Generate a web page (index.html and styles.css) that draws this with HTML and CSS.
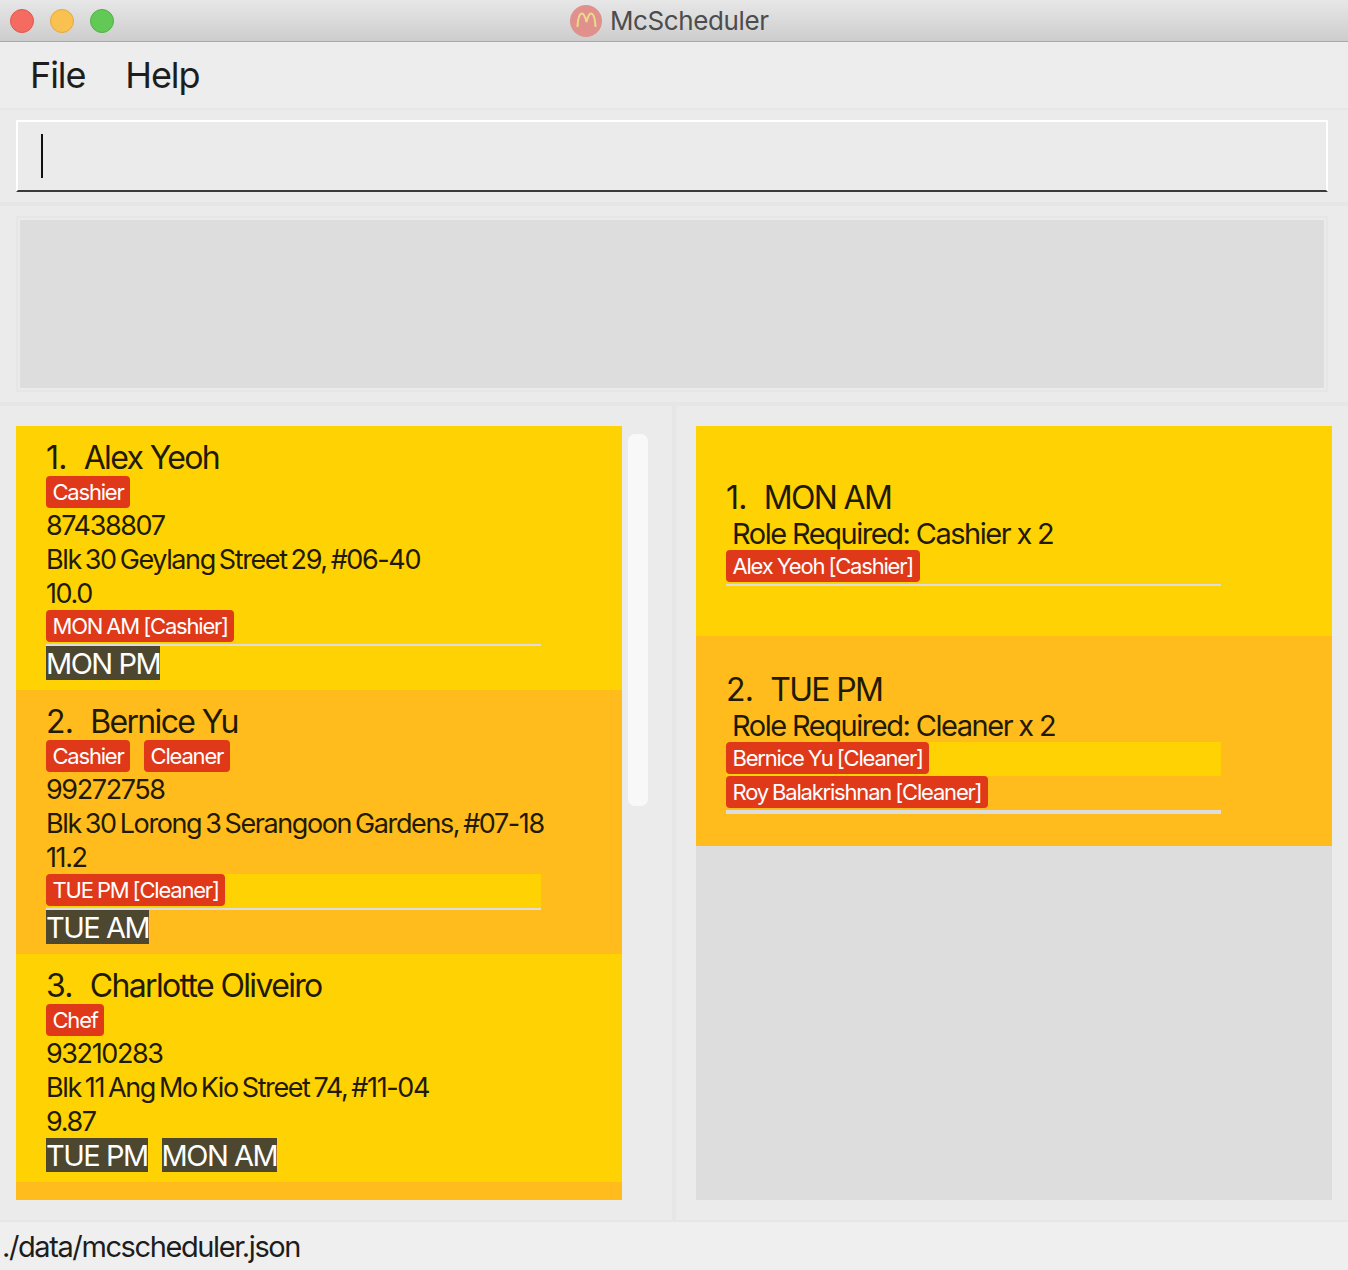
FILE: index.html
```html
<!DOCTYPE html>
<html lang="en">
<head>
    <meta charset="UTF-8">
    <meta name="viewport" content="width=device-width, initial-scale=1.0">
    <title>McScheduler</title>
    <link rel="stylesheet" href="styles.css">
</head>
<body>

<div class="titlebar">
    <div class="lights">
        <span class="light red"></span>
        <span class="light amber"></span>
        <span class="light green"></span>
    </div>
    <div class="title">
        <svg class="logo" viewBox="0 0 32 32" width="32" height="32">
            <circle cx="16" cy="16" r="16" fill="#e0918b"/>
            <path d="M7.5 22 C8 13 9.5 8.5 12 8.5 C14 8.5 15.5 13 16.5 17 C17.5 13 19 8.5 21 8.5 C23.5 8.5 25 13 25.5 22" fill="none" stroke="#eed98e" stroke-width="2"/>
        </svg>
        <span>McScheduler</span>
    </div>
</div>

<div class="menubar">
    <span>File</span>
    <span>Help</span>
</div>

<div class="command-pane">
    <div class="command-box"><div class="caret"></div></div>
</div>

<div class="result-pane">
    <div class="result-box"><div class="result-inner"></div></div>
</div>

<div class="lists">
    <div class="col col-left">
        <div class="list">
            <div class="card odd person">
                <div class="name"><span class="index">1.</span>Alex Yeoh</div>
                <div class="tags"><span class="tag">Cashier</span></div>
                <div class="line">87438807</div>
                <div class="line">Blk 30 Geylang Street 29, #06-40</div>
                <div class="line">10.0</div>
                <div class="assigned"><span class="tag">MON AM [Cashier]</span></div>
                <div class="slots"><span class="slot">MON PM</span></div>
            </div>
            <div class="card even person">
                <div class="name"><span class="index">2.</span>Bernice Yu</div>
                <div class="tags"><span class="tag">Cashier</span><span class="tag">Cleaner</span></div>
                <div class="line">99272758</div>
                <div class="line">Blk 30 Lorong 3 Serangoon Gardens, #07-18</div>
                <div class="line">11.2</div>
                <div class="assigned"><span class="tag">TUE PM [Cleaner]</span></div>
                <div class="slots"><span class="slot">TUE AM</span></div>
            </div>
            <div class="card odd person short">
                <div class="name"><span class="index">3.</span>Charlotte Oliveiro</div>
                <div class="tags"><span class="tag">Chef</span></div>
                <div class="line">93210283</div>
                <div class="line">Blk 11 Ang Mo Kio Street 74, #11-04</div>
                <div class="line">9.87</div>
                <div class="slots"><span class="slot">TUE PM</span><span class="slot">MON AM</span></div>
            </div>
            <div class="card even person">
                <div class="name"><span class="index">4.</span>David Li</div>
            </div>
        </div>
        <div class="scrollbar"></div>
    </div>
    <div class="divider"></div>
    <div class="col col-right">
        <div class="list">
            <div class="card odd shift">
                <div class="name"><span class="index">1.</span>MON AM</div>
                <div class="role">Role Required: Cashier x 2</div>
                <div class="assigned"><span class="tag">Alex Yeoh [Cashier]</span></div>
            </div>
            <div class="card even shift">
                <div class="name"><span class="index">2.</span>TUE PM</div>
                <div class="role">Role Required: Cleaner x 2</div>
                <div class="assigned"><span class="tag">Bernice Yu [Cleaner]</span></div>
                <div class="assigned"><span class="tag">Roy Balakrishnan [Cleaner]</span></div>
            </div>
        </div>
    </div>
</div>

<div class="statusbar">./data/mcscheduler.json</div>

</body>
</html>
```

FILE: styles.css
```css
* {
    box-sizing: border-box;
}

body {
    margin: 0;
    height: 1270px;
    overflow: hidden;
    background-color: #ebebeb;
    font-family: "Inter", "Liberation Sans", sans-serif;
    color: #1d1d1d;
    display: flex;
    flex-direction: column;
}

.titlebar {
    height: 42px;
    flex: none;
    display: flex;
    align-items: center;
    background-image: linear-gradient(#e7e7e7, #cdcdcd);
    border-bottom: 1px solid #a9a9a9;
}

.lights {
    display: flex;
    gap: 16px;
    padding-left: 10px;
    width: 570px;
    flex: none;
}

.light {
    width: 24px;
    height: 24px;
    border-radius: 50%;
}

.red {
    background-color: #f46b61;
    border: 1px solid #e2564c;
}

.amber {
    background-color: #f8c150;
    border: 1px solid #e3a93c;
}

.green {
    background-color: #62c956;
    border: 1px solid #50b145;
}

.title {
    display: flex;
    align-items: center;
    gap: 8px;
    font-size: 26px;
    letter-spacing: -0.4px;
    color: #4c4c4c;
}

.logo {
    display: block;
}

.menubar {
    height: 68px;
    flex: none;
    display: flex;
    align-items: center;
    gap: 40px;
    padding-left: 30px;
    font-size: 36px;
    letter-spacing: -1.1px;
    background-color: #ededed;
    border-bottom: 2px solid #e6e6e6;
}

.command-pane {
    height: 96px;
    flex: none;
    padding: 10px 20px 0 16px;
    border-bottom: 4px solid #e6e6e6;
}

.command-box {
    height: 72px;
    padding: 12px 0 0 23px;
    background-color: #ebebeb;
    border: 2px solid #ffffff;
    border-bottom-color: #3a3a3a;
}

.caret {
    width: 2px;
    height: 44px;
    background-color: #111111;
}

.result-pane {
    height: 200px;
    flex: none;
    padding: 10px 20px 10px 16px;
    border-bottom: 4px solid #e6e6e6;
}

.result-box {
    height: 100%;
    padding: 2px;
    border: 2px solid #e6e6e6;
}

.result-inner {
    height: 100%;
    background-color: #dddddd;
}

.lists {
    flex: 1;
    min-height: 0;
    display: flex;
}

.col {
    display: flex;
    padding: 20px 0;
}

.col-left {
    width: 672px;
    padding-left: 16px;
}

.col-right {
    flex: 1;
    padding-left: 20px;
    padding-right: 16px;
}

.divider {
    width: 4px;
    background-color: #e6e6e6;
}

.list {
    flex: 1;
    overflow: hidden;
    background-color: #dddddd;
}

.col-left .list {
    flex: none;
    width: 606px;
}

.scrollbar {
    width: 20px;
    height: 372px;
    margin: 8px 0 0 6px;
    border-radius: 7px;
    background-color: #f8f8f8;
}

.card {
    padding-left: 30px;
    color: #1f1a00;
}

.odd {
    background-color: #ffd204;
}

.even {
    background-color: #ffbc1c;
}

.person {
    height: 264px;
    padding-top: 14px;
}

.short {
    height: 228px;
}

.shift {
    height: 210px;
    padding-top: 54px;
}

.even.shift {
    padding-top: 36px;
}

.name {
    height: 36px;
    line-height: 36px;
    font-size: 32px;
    letter-spacing: -1.65px;
    white-space: nowrap;
}

.index {
    display: inline-block;
    margin-right: 17px;
    letter-spacing: -0.8px;
}

.role {
    height: 34px;
    line-height: 36px;
    padding-left: 6px;
    font-size: 29px;
    letter-spacing: -1.45px;
    word-spacing: -0.5px;
    white-space: nowrap;
}

.line {
    height: 34px;
    line-height: 35px;
    font-size: 27px;
    letter-spacing: -1.4px;
    word-spacing: -2.2px;
    white-space: nowrap;
}

.tags {
    display: flex;
    gap: 14px;
    height: 32px;
}

.assigned {
    display: flex;
    width: 495px;
    height: 34px;
    background-color: #ffd204;
}

.person .assigned,
.shift .assigned:last-child {
    height: 36px;
    border-bottom: 2px solid #dddddd;
}

.even.shift .assigned + .assigned {
    background-color: transparent;
    height: 38px;
    border-bottom-width: 4px;
}

.tag {
    height: 32px;
    line-height: 33px;
    padding: 0 6.5px;
    border-radius: 4px;
    font-size: 22px;
    letter-spacing: -1.2px;
    word-spacing: -0.8px;
    color: #ffffff;
    background-color: #e0391a;
    white-space: nowrap;
}

.slots {
    display: flex;
    gap: 14px;
    height: 34px;
}

.slot {
    height: 34px;
    line-height: 35px;
    font-size: 29px;
    letter-spacing: -1.5px;
    color: #ffffff;
    background-color: #4d4730;
    white-space: nowrap;
}

.statusbar {
    height: 50px;
    flex: none;
    padding-left: 2px;
    line-height: 50px;
    font-size: 29px;
    letter-spacing: -1.4px;
    background-color: #efefef;
    border-top: 2px solid #e6e6e6;
}
```
